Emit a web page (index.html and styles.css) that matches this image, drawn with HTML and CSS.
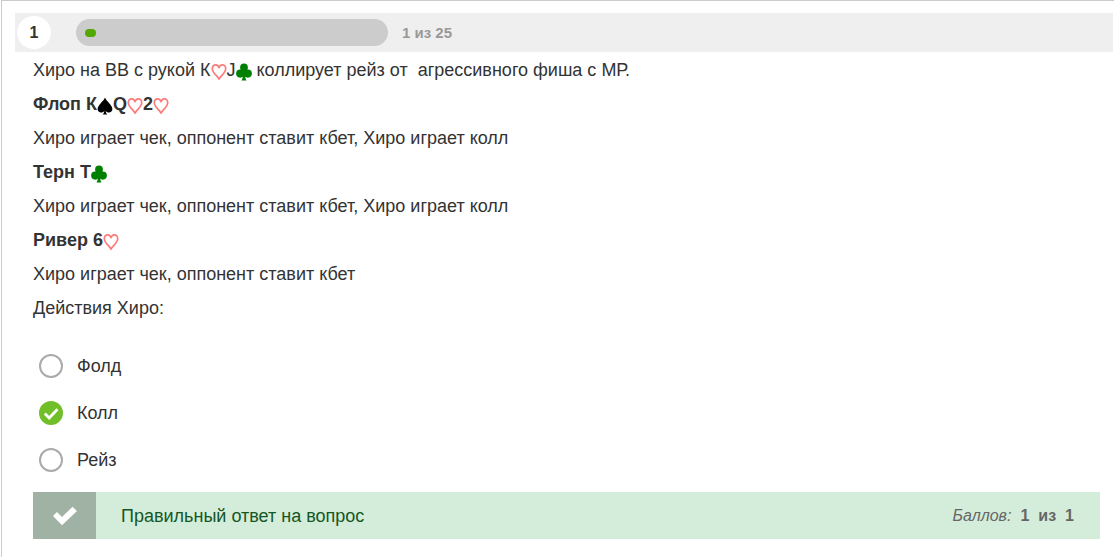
FILE: index.html
```html
<!DOCTYPE html>
<html lang="ru">
<head>
<meta charset="utf-8">
<meta name="viewport" content="width=device-width, initial-scale=1">
<title>Вопрос 1 из 25</title>
<link rel="stylesheet" href="styles.css">
</head>
<body>
<svg class="symbols" aria-hidden="true">
  <symbol id="heart" viewBox="0 0 16 18"><path d="M8 16.200C7 13.500 1.300 9.800 1.300 5.700C1.300 3.300 2.800 1.900 4.600 1.900C6.200 1.900 7.400 3 8 4.700C8.600 3 9.800 1.900 11.400 1.900C13.200 1.900 14.700 3.300 14.700 5.700C14.700 9.800 9 13.500 8 16.200Z" fill="none" stroke="#ff7b7b" stroke-width="1.700" stroke-linejoin="round"/></symbol>
  <symbol id="club" viewBox="0 0 16 18"><g fill="#008000"><circle cx="8" cy="4.500" r="3.900"/><circle cx="4.200" cy="10.600" r="4.100"/><circle cx="11.800" cy="10.600" r="4.100"/><path d="M6 6H10L9 11Q9 15.500 10.500 17.600H5.500Q7 15.500 7 11Z"/></g></symbol>
  <symbol id="spade" viewBox="0 0 16 18"><path d="M8 .5C9 4 15.400 8 15.400 12C15.400 14.300 13.700 15.500 12 15.500C10.400 15.500 9.200 14.700 8.600 13.400Q8.800 16 10.300 17.500H5.700Q7.200 16 7.400 13.400C6.800 14.700 5.600 15.500 4 15.500C2.300 15.500 .6 14.300 .6 12C.6 8 7 4 8 .5Z" fill="#000"/></symbol>
</svg>
<main class="quiz">
  <header class="quiz-header">
    <span class="question-number">1</span>
    <div class="progress" role="progressbar" aria-label="Ход теста" aria-valuemin="0" aria-valuemax="25" aria-valuenow="1"><span class="progress-fill"></span></div>
    <span class="progress-text">1 из 25</span>
  </header>
  <div class="content">
    <section class="question">
      <p>Хиро на ВВ с рукой К<svg class="suit"><use href="#heart"/></svg>J<svg class="suit"><use href="#club"/></svg> коллирует рейз от&nbsp; агрессивного фиша с МР.</p>
      <p><strong>Флоп К<svg class="suit"><use href="#spade"/></svg>Q<svg class="suit"><use href="#heart"/></svg>2<svg class="suit"><use href="#heart"/></svg></strong></p>
      <p>Хиро играет чек, оппонент ставит кбет, Хиро играет колл</p>
      <p><strong>Терн Т<svg class="suit"><use href="#club"/></svg></strong></p>
      <p>Хиро играет чек, оппонент ставит кбет, Хиро играет колл</p>
      <p><strong>Ривер 6<svg class="suit"><use href="#heart"/></svg></strong></p>
      <p>Хиро играет чек, оппонент ставит кбет</p>
      <p>Действия Хиро:</p>
    </section>
    <form class="answers">
      <label class="answer"><input type="radio" name="action" value="fold">Фолд</label>
      <label class="answer"><span class="choice"><input type="radio" name="action" value="call" checked><svg class="choice-mark" viewBox="0 0 24 24" aria-hidden="true"><path d="M5.800 12.600L10.200 17L18.500 8.200" fill="none" stroke="#fff" stroke-width="2.800"/></svg></span>Колл</label>
      <label class="answer"><input type="radio" name="action" value="raise">Рейз</label>
    </form>
    <div class="result" role="status">
      <span class="result-icon"><svg width="26" height="20" viewBox="0 0 26 20" aria-hidden="true"><path d="M1 10L5 6L10 11L20.500 .8L25 5L10 19.200Z" fill="#fff"/></svg></span>
      <span class="result-text">Правильный ответ на вопрос</span>
      <span class="score"><em>Баллов:</em><b>1</b><b>из</b><b>1</b></span>
    </div>
  </div>
</main>
</body>
</html>
```
FILE: styles.css
```css
* {
  box-sizing: border-box;
}

body {
  margin: 0;
  padding-left: 1px;
  background: #fff;
  color: #333;
  font: 18px/24px "Liberation Sans", Arial, sans-serif;
}

.symbols {
  position: absolute;
  width: 0;
  height: 0;
}

.quiz {
  min-height: 100vh;
  padding: 12px 1px 18px 13px;
  border: solid #ccc;
  border-width: 1px 0 0 1px;
}

.quiz-header {
  display: flex;
  align-items: center;
  padding: 3px 2px;
  background: #efefef;
  font-size: 16px;
  font-weight: bold;
}

.question-number {
  display: grid;
  place-items: center;
  width: 34px;
  height: 33px;
  border-radius: 50%;
  background: #fff;
}

.progress {
  display: flex;
  align-items: center;
  width: 312px;
  height: 27px;
  margin: 0 14px 0 25px;
  padding: 0 9px;
  border-radius: 14px;
  background: #ccc;
}

.progress-fill {
  width: 11px;
  height: 8px;
  border-radius: 4px;
  background: #53a800;
}

.progress-text {
  color: #999;
  font-size: 15px;
}

.content {
  padding: 6px 13px 0 18px;
}

.question p {
  margin: 0 0 10px;
}

.suit {
  width: 16px;
  height: 18px;
  vertical-align: -5px;
}

.answers {
  display: grid;
  gap: 23px;
  padding: 24px 6px 20px;
}

.answer {
  display: flex;
  align-items: center;
  gap: 14px;
}

.answer input {
  appearance: none;
  display: block;
  width: 24px;
  height: 24px;
  margin: 0;
  border: 2px solid #aaa;
  border-radius: 50%;
  background: #fff;
}

.answer input:checked {
  border-color: #70bf29;
  background: #70bf29;
}

.choice {
  position: relative;
}

.choice-mark {
  position: absolute;
  inset: 0;
  width: 24px;
  height: 24px;
  pointer-events: none;
}

.result {
  display: flex;
  align-items: center;
  min-height: 47px;
  padding-right: 26px;
  background: #d4edda;
  color: #155724;
}

.result-icon {
  display: grid;
  place-items: center;
  align-self: stretch;
  width: 63px;
  margin-right: 25px;
  background: #9fb2a3;
}

.score {
  display: flex;
  gap: 9px;
  margin-left: auto;
  color: #666;
  font-size: 16px;
}
```
